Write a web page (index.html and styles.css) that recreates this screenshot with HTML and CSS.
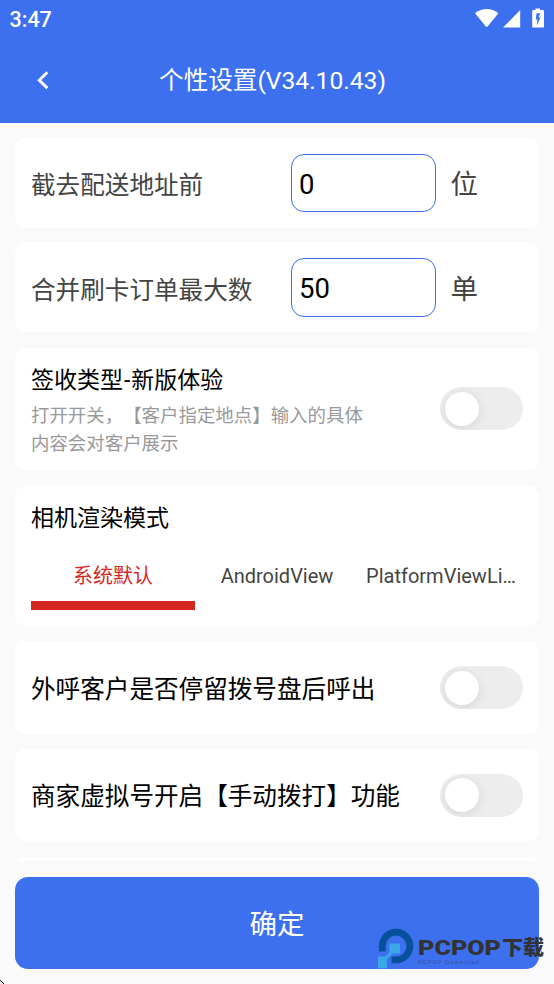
FILE: index.html
```html
<!DOCTYPE html>
<html lang="zh-CN">
<head>
<meta charset="utf-8">
<title>个性设置</title>
<link rel="stylesheet" href="styles.css">
</head>
<body>
<header class="header">
  <div class="status">
    <span class="time">3:47</span>
    <svg class="status-icons" width="76" height="24" viewBox="0 0 76 24" fill="#fff">
      <path d="M0 5.2Q11.7-3.2 23.4 5.2L12.3 18.7Q11.7 19.4 11.1 18.7Z"/>
      <path d="M28 19.5 45.2 2V19.5Z"/>
      <path fill-rule="evenodd" d="M60.5 2V0.4h4.6V2h2.7Q69 2 69 3.2V18.4Q69 19.6 67.8 19.6H58.4Q57.2 19.6 57.2 18.4V3.2Q57.2 2 58.4 2ZM61.6 5.2 60.7 11.6H62.5L61.6 17.6 65.6 9.6H63.5L65.3 5.2Z"/>
    </svg>
  </div>
  <div class="nav">
    <svg class="back" width="14" height="20" viewBox="0 0 14 20" fill="none" stroke="#fff" stroke-width="2.9"><path d="M12.3 1.3 4.3 9.2 12.3 17.1"/></svg>
    <h1 class="title">个性设置(V34.10.43)</h1>
  </div>
</header>
<main class="list">
  <section class="card field-card">
    <label class="label">截去配送地址前</label>
    <div class="input">0</div><span class="unit">位</span>
  </section>
  <section class="card field-card">
    <label class="label">合并刷卡订单最大数</label>
    <div class="input">50</div><span class="unit">单</span>
  </section>
  <section class="card desc-card">
    <div class="copy">
      <h2 class="heading">签收类型<span class="dash">-</span>新版体验</h2>
      <p class="desc">打开开关，【客户指定地点】输入的具体<br>内容会对客户展示</p>
    </div>
    <div class="switch"></div>
  </section>
  <section class="card tab-card">
    <h2 class="heading">相机渲染模式</h2>
    <div class="tabs">
      <div class="tab active">系统默认</div>
      <div class="tab">AndroidView</div>
      <div class="tab">PlatformViewLi…</div>
    </div>
  </section>
  <section class="card switch-card"><span class="label dark">外呼客户是否停留拨号盘后呼出</span><div class="switch"></div></section>
  <section class="card switch-card"><span class="label dark">商家虚拟号开启【手动拨打】功能</span><div class="switch"></div></section>
  <section class="card switch-card"></section>
</main>
<footer class="footer"><div class="confirm">确定</div></footer>
<svg class="watermark" width="176" height="46" viewBox="0 0 176 46">
  <path d="M4.3 23.5V18A13.8 13.8 0 1 1 18 31.8H13.5" fill="none" stroke="#07519c" stroke-width="6.8"/>
  <path d="M11.5 15.5H22V25.5H14.5L9 31V40.5H0V28.5H7.5L11.5 24Z" fill="#38a8e8"/>
  <text class="brand" x="40" y="27.2" textLength="83" lengthAdjust="spacingAndGlyphs">PCPOP</text>
  <text class="brand-cn" x="124" y="27" textLength="42" lengthAdjust="spacingAndGlyphs">下载</text>
  <text class="brand-sub" x="40" y="35.8" textLength="61">PCPOP Download</text>
</svg>
<svg class="corner" width="5" height="5" viewBox="0 0 5 5" fill="#111"><path d="M0 1h1v1H0zM1 2h1v1H1zM2 3h1v1H2zM3 4h1v1H3z"/></svg>
</body>
</html>
```
FILE: styles.css
```css
* { box-sizing: border-box; }
body {
  margin: 0;
  width: 554px;
  height: 984px;
  overflow: hidden;
  position: relative;
  display: flex;
  flex-direction: column;
  background: #fafafa;
  font-family: Roboto, "Noto Sans CJK SC", sans-serif;
  text-spacing-trim: space-all;
  color: #000;
}
h1, h2, p { margin: 0; font-weight: 400; }
.header { flex: none; height: 123px; background: #3c70ef; color: #fff; }
.status { height: 38px; padding: 0 0 0 9.5px; display: flex; align-items: center; justify-content: space-between; }
.time { font-size: 21.5px; font-weight: 500; line-height: 38px; padding-top: 2px; }
.status-icons { margin-right: 3px; margin-top: 2px; flex: none; }
.nav { height: 85px; display: grid; grid-template-columns: 67px 1fr 76px; align-items: center; }
.back { margin-left: 35px; }
.title { text-align: center; font-size: 24.6px; line-height: 36px; white-space: nowrap; padding-top: 1px; }
.list { flex: none; height: 738px; padding: 15.3px 15px 0; overflow: hidden; display: flex; flex-direction: column; gap: 15.3px; }
.card { flex: none; background: #fff; border-radius: 10px; padding: 0 16px; }
.field-card { height: 89.4px; display: grid; grid-template-columns: 259.5px 145px 1fr; align-items: center; }
.label { font-size: 24.6px; line-height: 36px; color: #444; white-space: nowrap; padding-top: 7px; }
.label.dark { color: #000; padding-top: 4px; }
.input { height: 58.5px; border: 1.6px solid #3c70ef; border-radius: 13px; padding-left: 7.5px; font-size: 27.5px; line-height: 60px; }
.unit { font-size: 27.5px; line-height: 40px; color: #444; padding: 4px 0 0 15px; }
.desc-card { height: 122.6px; display: flex; justify-content: space-between; align-items: center; }
.copy { padding-top: 4px; }
.heading { font-size: 23px; line-height: 34px; }
.dash { padding: 0 1px; }
.desc { margin-top: 4px; font-size: 18.45px; line-height: 28px; color: #999; white-space: nowrap; }
.switch { flex: none; width: 83px; height: 43px; padding: 4.5px 5px; border-radius: 22px; background: #ededed; overflow: hidden; }
.switch::before { content: ""; display: block; width: 34px; height: 34px; border-radius: 50%; background: #fff; box-shadow: 0 2px 10px 2px rgba(0, 0, 0, .07); }
.tab-card { height: 140.5px; padding-top: 16px; }
.tabs { display: grid; grid-template-columns: repeat(3, 164px); margin-top: 14px; height: 60px; }
.tab { height: 60px; text-align: center; color: #444; font-size: 20px; line-height: 53px; white-space: nowrap; }
.tab.active { color: #d52720; border-bottom: 9px solid #d52720; }
.switch-card { height: 92.3px; display: flex; align-items: center; justify-content: space-between; }
.footer { padding: 15.5px 15px; }
.confirm { height: 92px; border-radius: 13px; background: #3c70ef; color: #fff; font-size: 27.5px; line-height: 95px; text-align: center; }
.watermark { position: absolute; left: 378px; top: 927.5px; }
.brand { font: 900 20px Roboto, sans-serif; fill: #333; }
.brand-cn { font: 900 20px "Noto Sans CJK SC", sans-serif; fill: #333; }
.brand-sub { font: 6px Roboto, sans-serif; fill: #36539b; }
.corner { position: absolute; left: 0; top: 979px; }
```
